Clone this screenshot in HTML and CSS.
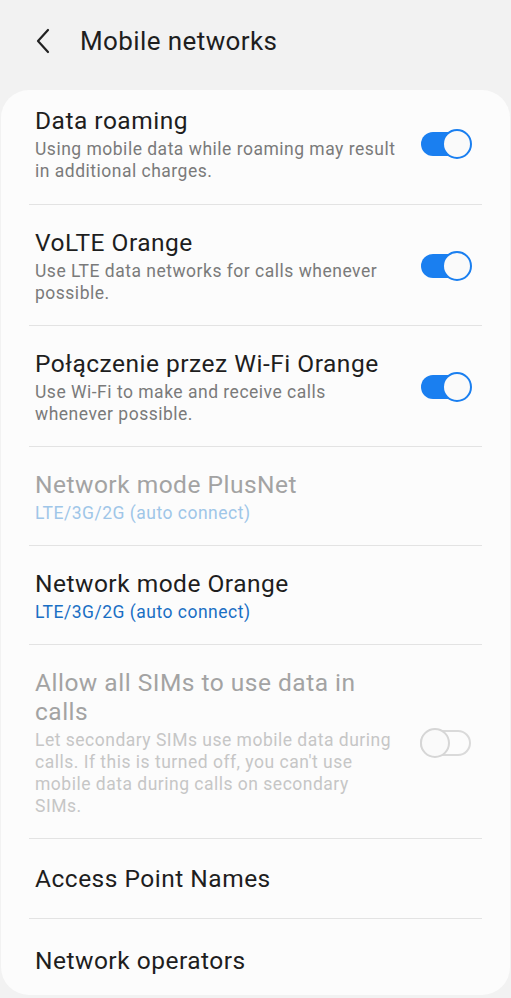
FILE: index.html
```html
<!DOCTYPE html>
<html>
<head>
<meta charset="utf-8">
<link rel="stylesheet" href="styles.css">
</head>
<body>
<header class="topbar">
  <svg class="back" width="18" height="28" viewBox="0 0 18 28"><path d="M14 3 L4 14 L14 25" fill="none" stroke="#222" stroke-width="2.2" stroke-linecap="round" stroke-linejoin="round"/></svg>
  <h1 class="page-title">Mobile networks</h1>
</header>
<main class="card">
  <div class="row first">
    <div class="text">
      <div class="title">Data roaming</div>
      <div class="sub">Using mobile data while roaming may result in additional charges.</div>
    </div>
    <span class="toggle on"><span class="track"></span><span class="thumb"></span></span>
  </div>
  <div class="row">
    <div class="text">
      <div class="title">VoLTE Orange</div>
      <div class="sub">Use LTE data networks for calls whenever possible.</div>
    </div>
    <span class="toggle on"><span class="track"></span><span class="thumb"></span></span>
  </div>
  <div class="row">
    <div class="text">
      <div class="title">Połączenie przez Wi-Fi Orange</div>
      <div class="sub">Use Wi-Fi to make and receive calls whenever possible.</div>
    </div>
    <span class="toggle on"><span class="track"></span><span class="thumb"></span></span>
  </div>
  <div class="row disabled">
    <div class="text">
      <div class="title">Network mode PlusNet</div>
      <div class="sub blue">LTE/3G/2G (auto connect)</div>
    </div>
  </div>
  <div class="row">
    <div class="text">
      <div class="title">Network mode Orange</div>
      <div class="sub blue">LTE/3G/2G (auto connect)</div>
    </div>
  </div>
  <div class="row disabled">
    <div class="text">
      <div class="title">Allow all SIMs to use data in calls</div>
      <div class="sub">Let secondary SIMs use mobile data during calls. If this is turned off, you can't use mobile data during calls on secondary SIMs.</div>
    </div>
    <span class="toggle off"><span class="track"></span><span class="thumb"></span></span>
  </div>
  <div class="row single">
    <div class="text"><div class="title">Access Point Names</div></div>
  </div>
  <div class="row single last">
    <div class="text"><div class="title">Network operators</div></div>
  </div>
</main>
</body>
</html>
```

FILE: styles.css
```css
* { box-sizing: border-box; }
html, body { margin: 0; padding: 0; }
body {
  background: #f2f2f2;
  font-family: Roboto, "Noto Sans", sans-serif;
  color: #1e1e1e;
  width: 511px;
  overflow: hidden;
}
.topbar {
  height: 90px;
  display: flex;
  align-items: center;
  padding: 0 0 8px 34px;
}
.back { display: block; margin-right: 28px; }
.page-title {
  margin: 0;
  font-size: 26px;
  font-weight: 400;
  color: #1e1e1e;
  letter-spacing: 0.4px;
}
.card {
  background: #fcfcfc;
  border-radius: 28px;
  margin: 0 1px;
  padding: 0 28px;
  height: 905px;
  overflow: hidden;
}
.row {
  display: flex;
  align-items: center;
  padding: 23px 10px 21px 6px;
  border-bottom: 1px solid #e3e3e3;
}
.row.first { padding-top: 16px; padding-bottom: 22px; }
.row.single { min-height: 80px; padding-top: 0; padding-bottom: 0; }
.row.last { border-bottom: none; padding-top: 2px; }
.text { flex: 1; min-width: 0; padding-right: 22px; }
.title {
  font-size: 24.5px;
  line-height: 29px;
  letter-spacing: 0.5px;
  color: #1e1e1e;
}
.sub {
  margin-top: 3px;
  font-size: 17.5px;
  line-height: 22px;
  letter-spacing: 0.5px;
  color: #7a7a7a;
}
.sub.blue { color: #1a6fc4; }
.disabled .title { color: #a3a3a3; }
.disabled .sub { color: #c6c6c6; }
.disabled .sub.blue { color: #9fc6e8; }
.toggle {
  position: relative;
  flex: none;
  width: 52px;
  height: 30px;
}
.track {
  position: absolute;
  left: 1px;
  top: 3px;
  width: 49px;
  height: 24px;
  border-radius: 12px;
}
.thumb {
  position: absolute;
  top: 0;
  width: 30px;
  height: 30px;
  border-radius: 50%;
  background: #fafafa;
}
.toggle.on .track { background: #1a7ff0; }
.toggle.on .thumb { right: 0; border: 2px solid #1a7ff0; }
.toggle.off .track { border: 2px solid #dadada; top: 2px; height: 26px; border-radius: 13px; width: 51px; left: 0; }
.toggle.off .thumb { left: 0; border: 2px solid #d6d6d6; }
```
